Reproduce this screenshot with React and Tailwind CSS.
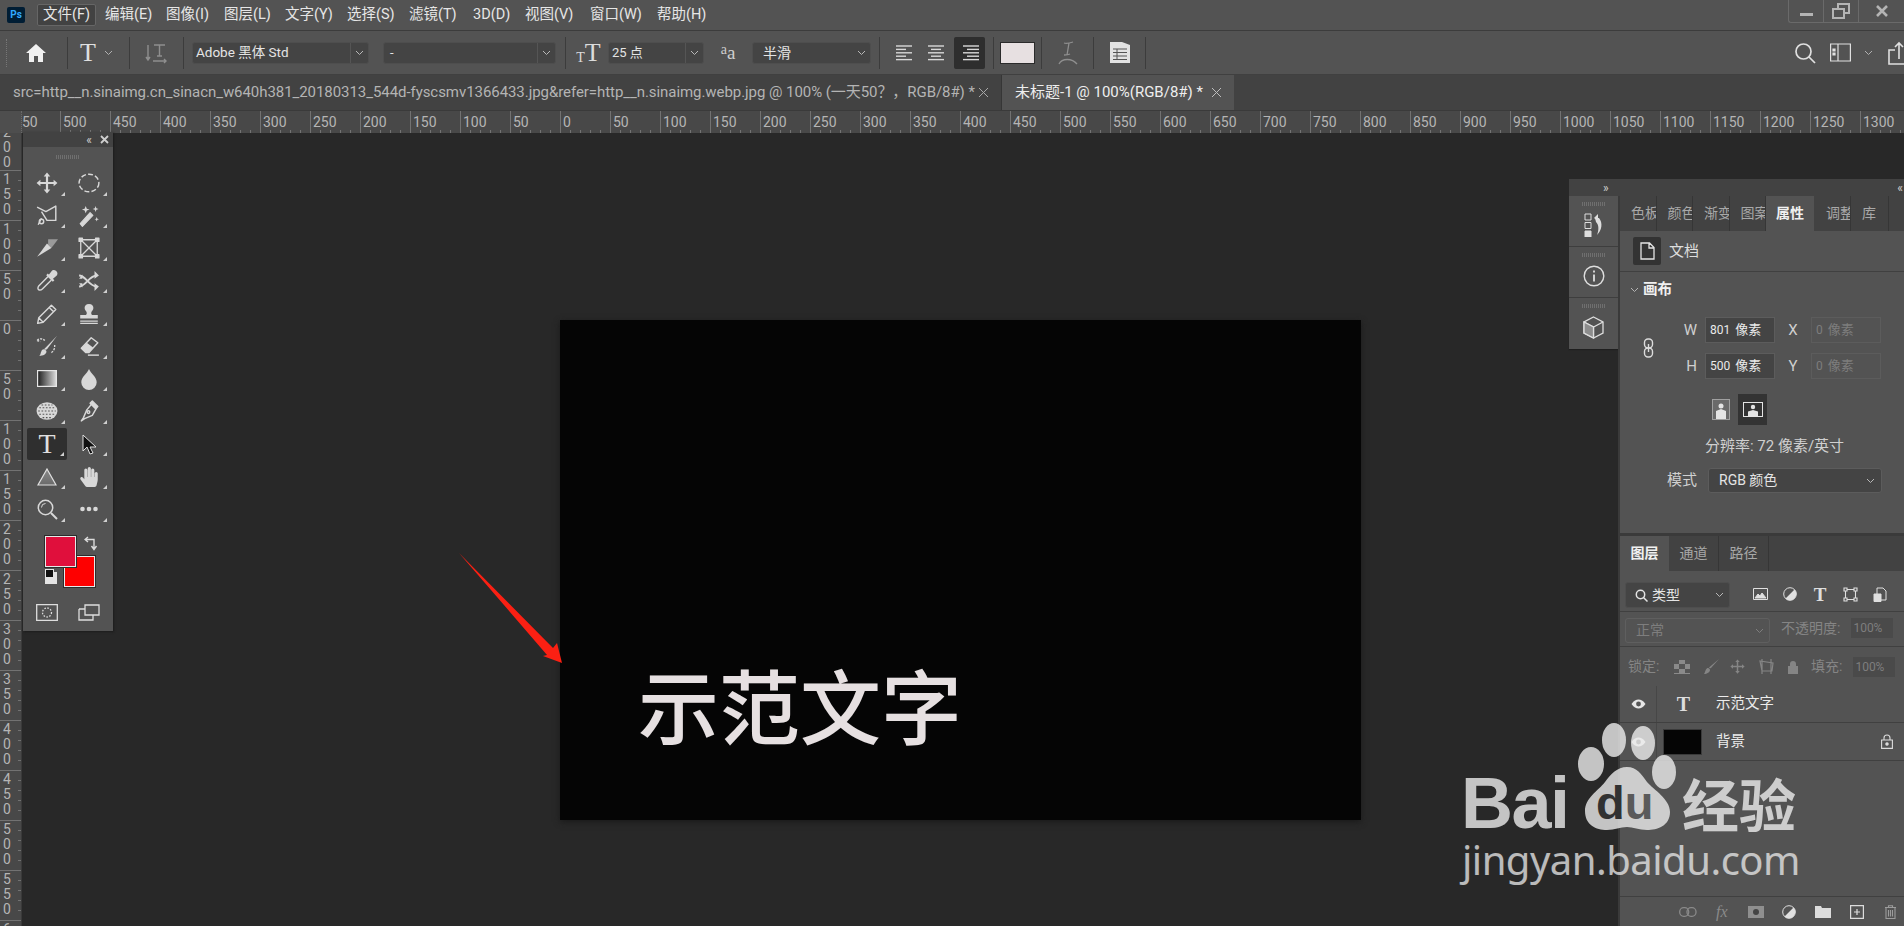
import { FaHandPaper } from "react-icons/fa";

const MENU = [
  ["文件(F)", "w-[68px] pl-[6px]"],
  ["编辑(E)", "w-[61px]"],
  ["图像(I)", "w-[58px]"],
  ["图层(L)", "w-[61px]"],
  ["文字(Y)", "w-[62px]"],
  ["选择(S)", "w-[62px]"],
  ["滤镜(T)", "w-[64px]"],
  ["3D(D)", "w-[52px]"],
  ["视图(V)", "w-[65px]"],
  ["窗口(W)", "w-[67px]"],
  ["帮助(H)", "w-[62px]"],
];

const H_LABELS = [
  500, 450, 400, 350, 300, 250, 200, 150, 100, 50, 0, 50, 100, 150, 200, 250, 300, 350, 400, 450, 500, 550, 600, 650,
  700, 750, 800, 850, 900, 950, 1000, 1050, 1100, 1150, 1200, 1250, 1300,
];
const V_LABELS = [150, 100, 50, 0, 50, 100, 150, 200, 250, 300, 350, 400, 450, 500, 550, 600];

function Ico({ s = 22, children, className = "", sw = 1.3 }) {
  return (
    <svg
      width={s}
      height={s}
      viewBox="0 0 20 20"
      fill="none"
      stroke="currentColor"
      strokeWidth={sw}
      strokeLinejoin="round"
      className={className}
    >
      {children}
    </svg>
  );
}

function Sep() {
  return <div className="w-px h-[32px] bg-[#3c3c3c] shrink-0" />;
}

function Chevron({ className = "" }) {
  return (
    <svg width="9" height="6" viewBox="0 0 9 6" fill="none" stroke="currentColor" className={className}>
      <path d="M1 1l3.5 3.5L8 1" />
    </svg>
  );
}

function Field({ className, text, divider = true, textClass = "pl-[3px] text-[13px]" }) {
  return (
    <div className={`h-[22px] shrink-0 flex items-center bg-[#444444] border border-[#4e4e4e] rounded-[3px] ${className}`}>
      <span className={`flex-1 leading-none text-[#e4e4e4] ${textClass}`}>{text}</span>
      <div className={`w-[18px] h-full flex items-center justify-center text-[#b8b8b8] ${divider ? "border-l border-[#555555]" : ""}`}>
        <Chevron />
      </div>
    </div>
  );
}

function AlignIcon({ kind }) {
  const rows = [
    [16, 10, 16, 10, 16],
    [16, 10, 16, 10, 16],
    [16, 12, 16, 12, 16],
  ][kind];
  return (
    <svg width="20" height="20" viewBox="0 0 20 20" stroke="#d8d8d8" strokeWidth="1.4">
      {rows.map((w, i) => {
        const x = kind === 0 ? 1 : kind === 1 ? 10 - w / 2 : 19 - w;
        return <path key={i} d={`M${x} ${3 + i * 3.4}h${w}`} />;
      })}
    </svg>
  );
}

function TabClose({ color }) {
  return (
    <svg width="11" height="11" viewBox="0 0 11 11" stroke={color} strokeWidth="1" className="shrink-0">
      <path d="M1 1l9 9M10 1l-9 9" />
    </svg>
  );
}

function OptionsBar() {
  return (
    <div className="h-[44px] shrink-0 flex items-center bg-[#535353] border-b border-[#404040] text-[#dcdcdc]">
      <div className="w-[67px] flex items-center shrink-0">
        <div className="w-[1px] h-[28px] ml-[6px] border-l border-dotted border-[#777777]" />
        <svg width="22" height="20" viewBox="0 0 22 20" className="ml-[18px]" fill="#f0f0f0">
          <path d="M11 1L1 10h3v9h5v-6h4v6h5v-9h3z" />
        </svg>
      </div>
      <Sep />
      <div className="w-[61px] flex items-center shrink-0 pl-[12px] gap-[8px]">
        <span className="font-['Liberation_Serif',serif] text-[26px] leading-none text-[#e0e0e0]">T</span>
        <Chevron className="text-[#b0b0b0]" />
      </div>
      <Sep />
      <div className="w-[53px] flex justify-center shrink-0 text-[#8f8f8f]">
        <svg width="24" height="24" viewBox="0 0 24 24" fill="none" stroke="currentColor" strokeWidth="1.4">
          <path d="M3 4v15M1 16l2 3 2-3M9 4h11M14.500 4v11M12 15h5M8 20h13M19 18l2 2-2 2" />
        </svg>
      </div>
      <Sep />
      <div className="w-[8px] shrink-0" />
      <Field className="w-[177px]" text="Adobe 黑体 Std" textClass="pl-[3px] text-[13.500px]" />
      <div className="w-[14px] shrink-0" />
      <Field className="w-[173px]" text="-" textClass="pl-[6px] text-[13px]" />
      <div className="w-[9px] shrink-0" />
      <Sep />
      <div className="w-[42px] shrink-0 flex items-end justify-center pl-[3px]">
        <span className="font-['Liberation_Serif',serif] text-[14px] leading-none text-[#dcdcdc] mb-[1px]">T</span>
        <span className="font-['Liberation_Serif',serif] text-[26px] leading-none text-[#dcdcdc]">T</span>
      </div>
      <Field className="w-[96px]" text="25 点" />
      <div className="w-[48px] shrink-0 flex items-end justify-center font-['Liberation_Serif',serif] text-[#cfcfcf]">
        <span className="text-[14px] leading-none mb-[5px]">a</span>
        <span className="text-[19px] leading-none">a</span>
      </div>
      <Field className="w-[119px]" text="半滑" divider={false} textClass="pl-[10px] text-[14px]" />
      <div className="w-[8px] shrink-0" />
      <Sep />
      <div className="w-[15px] shrink-0" />
      <div className="w-[20px] shrink-0 flex">
        <AlignIcon kind={0} />
      </div>
      <div className="w-[11px] shrink-0" />
      <div className="w-[20px] shrink-0 flex">
        <AlignIcon kind={1} />
      </div>
      <div className="w-[8px] shrink-0" />
      <div className="w-[31px] h-[32px] shrink-0 flex items-center justify-center bg-[#2e2e2e] rounded-[2px]">
        <AlignIcon kind={2} />
      </div>
      <div className="w-[8px] shrink-0" />
      <Sep />
      <div className="w-[6px] shrink-0" />
      <div className="w-[35px] h-[22px] shrink-0 bg-[#e7e0e1] border border-[#2b2b2b]" />
      <div className="w-[6px] shrink-0" />
      <Sep />
      <div className="w-[51px] shrink-0 flex justify-center text-[#8f8f8f]">
        <svg width="20" height="26" viewBox="0 0 20 26" fill="none" stroke="currentColor" strokeWidth="1.3">
          <path d="M6 3c3 1 6 0 9-1M11 3L9 15M6 15c2 0 4 0 6-1M1 24c3-6 13-6 18 0" />
        </svg>
      </div>
      <Sep />
      <div className="w-[51px] shrink-0 flex justify-center">
        <svg width="22" height="23" viewBox="0 0 22 23" fill="#e2e2e2">
          <path d="M1 1h12l8 3v18H1z" />
          <path d="M4 8h14M4 11.500h14M4 15h14M4 18.500h14M8 8v11" stroke="#555555" strokeWidth="1" />
        </svg>
      </div>
      <Sep />
      <div className="ml-auto flex items-center text-[#e0e0e0] shrink-0 -mr-[2px]">
        <svg width="22" height="22" viewBox="0 0 22 22" fill="none" stroke="currentColor" strokeWidth="1.7">
          <circle cx="9.500" cy="9.500" r="7.500" />
          <path d="M15 15l6 6" />
        </svg>
        <svg width="21" height="19" viewBox="0 0 21 19" fill="none" stroke="currentColor" strokeWidth="1.2" className="ml-[14px]">
          <path d="M.6 1h19.800v17H.6zM8 1v17" />
          <path d="M3 6h2v2H3zM3 10h2v2H3z" fill="currentColor" />
        </svg>
        <Chevron className="ml-[13px] text-[#b0b0b0]" />
        <svg width="18" height="24" viewBox="0 0 18 24" fill="none" stroke="currentColor" strokeWidth="1.600" className="ml-[15px]">
          <path d="M7 9H1v14h16" />
          <path d="M11 18V2M7 6l4-4 4 4" />
        </svg>
      </div>
    </div>
  );
}

function TabBar() {
  return (
    <div className="h-[36px] shrink-0 flex bg-[#424242] border-b border-[#3a3a3a]">
      <div className="w-[1002px] shrink-0 flex items-center pl-[13px] text-[#b4b4b4] text-[15px] whitespace-nowrap overflow-hidden border-r border-[#363636]">
        <span className="w-[956px] shrink-0 tracking-[-0.06px]">
          src=http__n.sinaimg.cn_sinacn_w640h381_20180313_544d-fyscsmv1366433.jpg&refer=http__n.sinaimg.webp.jpg @ 100% (一天50？，RGB/8#) *
        </span>
        <span className="ml-[9px]">
          <TabClose color="#a8a8a8" />
        </span>
      </div>
      <div className="w-[232px] shrink-0 flex items-center pl-[13px] bg-[#535353] text-[#eeeeee] text-[15px] whitespace-nowrap">
        <span className="w-[187px] shrink-0">未标题-1 @ 100%(RGB/8#) *</span>
        <span className="ml-[9px]">
          <TabClose color="#bdbdbd" />
        </span>
      </div>
    </div>
  );
}

function HTicks() {
  return (
    <svg width="50" height="22" className="absolute left-0 top-0" stroke="#727272">
      <path d="M.5 0v22M10.500 19v3M20.500 19v3M30.500 19v3M40.500 19v3" />
    </svg>
  );
}

function HRuler() {
  return (
    <div className="h-[22px] shrink-0 flex bg-[#484848] overflow-hidden text-[#b5b5b5] text-[14px] leading-[22px]">
      <div className="w-[22px] shrink-0 bg-[#4e4e4e] border-r border-dotted border-[#6a6a6a]" />
      <div className="w-[38px] shrink-0">50</div>
      {H_LABELS.map((n, i) => (
        <div key={i} className="w-[50px] shrink-0 relative pl-[3px]">
          <HTicks />
          <span className="relative">{n}</span>
        </div>
      ))}
    </div>
  );
}

function VDigits({ n }) {
  return (
    <div className="flex flex-col items-start pt-[2px] pl-[3px] text-[14px] leading-[15px] text-[#b5b5b5]">
      {String(n)
        .split("")
        .map((d, i) => (
          <span key={i}>{d}</span>
        ))}
    </div>
  );
}

function VRuler() {
  return (
    <div className="w-[22px] shrink-0 flex flex-col bg-[#484848] overflow-hidden border-r border-[#3a3a3a]">
      <div className="h-[37px] shrink-0 flex flex-col justify-end overflow-hidden">
        <VDigits n={200} />
      </div>
      {V_LABELS.map((n, i) => (
        <div key={i} className="h-[50px] shrink-0 relative">
          <svg width="22" height="50" className="absolute left-0 top-0" stroke="#727272">
            <path d="M0 .5h22M18 10.500h3M18 20.500h3M18 30.500h3M18 40.500h3" />
          </svg>
          <VDigits n={n} />
        </div>
      ))}
    </div>
  );
}

const TOOLS = [
  <Ico key="move" sw={0}>
    <path
      fill="currentColor"
      d="M10 .5l3 3.500h-2v5h5V7l3.500 3L16 13v-2h-5v5h2l-3 3.500L7 16h2v-5H4v2L.5 10 4 7v2h5V4H7z"
    />
  </Ico>,
  <Ico key="marquee">
    <ellipse cx="10" cy="10" rx="9" ry="8" strokeDasharray="4.500 2" />
  </Ico>,
  <Ico key="lasso">
    <path d="M1 2l8 4 9-5v13l-8 0-5-8M5 12l-3 6" />
    <circle cx="5" cy="15" r="2" />
  </Ico>,
  <Ico key="wand" sw={0}>
    <path d="M2 17l9-10 2.500 2.500-9.500 10z" fill="currentColor" stroke="currentColor" strokeWidth="1" />
    <path fill="currentColor" d="M7 1l1 2.500L10.500 4 8 5 7 7.500 6 5 3.500 4 6 3.500zM16 1l.7 2 2 .7-2 .7-.7 2-.7-2-2-.7 2-.7zM17 11l.6 1.500 1.500.5-1.500.5L17 15l-.6-1.500L15 13l1.400-.5z" />
  </Ico>,
  <Ico key="slice" sw={0}>
    <path fill="#9a9a9a" d="M11 2h9l-6 8-3-3z" />
    <path fill="currentColor" d="M10 6l4 4L1 18z" />
  </Ico>,
  <Ico key="frame" sw={1.2}>
    <path d="M2.500 2.500h15v15h-15zM2.500 2.500l15 15M17.500 2.500l-15 15" />
    <path
      fill="currentColor"
      d="M1 1h3v3H1zM16 1h3v3h-3zM1 16h3v3H1zM16 16h3v3h-3z"
    />
  </Ico>,
  <Ico key="dropper">
    <path d="M11 6L2.500 14.500c-1 1.500-1 3 0 3.500s2.500 0 3.500-1L14 9" />
    <path d="M10 4l6 6" strokeWidth="2" />
    <path fill="currentColor" d="M12 5l3-4c1-.7 3 0 3.700 1.500.3 1 0 2-1 2.700L14.500 8z" />
  </Ico>,
  <Ico key="cam" sw={1.700}>
    <path d="M1 5c6 0 9 10 16 10M1 15c6 0 9-10 16-10" />
    <path fill="currentColor" d="M15 1l4 4-4 3zM15 12l4 3-4 4zM1 8l3-4v4zM1 12l3 4v-4z" strokeWidth="0" />
  </Ico>,
  <Ico key="pencil">
    <path d="M1.500 18.500l1-5L14 2l4 4L6.500 17.500zM2.500 13.500l4 4M12 4l4 4" />
  </Ico>,
  <Ico key="stamp" sw={0}>
    <path fill="currentColor" d="M10 1c2.800 0 4 2 4 3.500 0 2-2 3-2 4.500 0 1 .5 2 1.500 2H18v3H2v-3h4.500C7.500 11 8 10 8 9 8 7.500 6 6.500 6 4.500 6 3 7.200 1 10 1zM2 16h16v1H2zM2 18h16v1H2z" />
  </Ico>,
  <Ico key="brush" sw={0}>
    <path fill="currentColor" d="M19 1L10 13c-1 .6-2 .3-2.500-.3zM7 13c1 0 2.500 1 2.500 2 0 2.500-3 4-6.500 4 1.500-1.500 1-3 2-4.500.3-.8 1-1.500 2-1.500z" />
    <path d="M1 5c2-2 5-2 7 0M1 5l3 1M1 5l2-2M17 9c0 2 0 5-3 7" fill="none" stroke="currentColor" strokeWidth="1.200" strokeDasharray="2 1" />
  </Ico>,
  <Ico key="eraser">
    <path d="M3 12L12 2.500l6 4.500-8 9H7z" />
    <path fill="currentColor" strokeWidth="0" d="M3 12L8 7l6 4.500-4 4.500H7z" />
    <path d="M9 18.300h10" />
  </Ico>,
  <svg key="grad" width="20" height="18" viewBox="0 0 20 18">
    <defs>
      <linearGradient id="grd">
        <stop offset="0" stopColor="#1d1d1d" />
        <stop offset="1" stopColor="#dddddd" />
      </linearGradient>
    </defs>
    <rect x=".6" y=".6" width="18.800" height="15.800" fill="url(#grd)" stroke="#e6e6e6" strokeWidth="1.200" />
  </svg>,
  <Ico key="drop" sw={0}>
    <path fill="currentColor" d="M10 1c1.500 4 7 7 7 12a7 7 0 0 1-14 0c0-5 5.500-8 7-12z" />
  </Ico>,
  <Ico key="sponge" sw={0}>
    <ellipse cx="10" cy="10" rx="9.500" ry="8" fill="currentColor" />
    <path d="M3 7h14M2 10h16M3 13h14M5 4.500h10M6 16h8" stroke="#555555" strokeWidth="1" strokeDasharray="1.500 1.500" />
  </Ico>,
  <Ico key="pen">
    <path d="M13 3l4 4-4 7-7 3-3 2 2-3 3-7z" />
    <path fill="currentColor" d="M13 1l5 5-2 2-5-5z" />
    <circle cx="9.500" cy="11" r="1.200" />
  </Ico>,
  <span key="T" className="font-['Liberation_Serif',serif] text-[28px] leading-none text-[#e0e0e0]">T</span>,
  <svg key="arrow" width="16" height="21" viewBox="0 0 16 21">
    <path d="M2 1v16l4-4 3 7 3-1-3-6h6z" fill="#111111" stroke="#e0e0e0" strokeWidth="1" />
  </svg>,
  <svg key="shape" width="20" height="18" viewBox="0 0 20 18">
    <defs>
      <linearGradient id="shp" x1="0" x2="0" y1="0" y2="1">
        <stop offset="0" stopColor="#8a8a8a" />
        <stop offset="1" stopColor="#6a6a6a" />
      </linearGradient>
    </defs>
    <path d="M10 1l9 16H1z" fill="url(#shp)" stroke="#e0e0e0" strokeWidth="1.200" />
  </svg>,
  <FaHandPaper key="hand" size={20} />,
  <svg key="zoom" width="21" height="21" viewBox="0 0 21 21" fill="none" stroke="currentColor" strokeWidth="1.500">
    <circle cx="8.500" cy="8.500" r="7.200" />
    <path d="M4.500 8.500a4 4 0 0 1 4-4" strokeWidth="1" />
    <path d="M14 14l6 6" strokeWidth="2" />
  </svg>,
  <svg key="more" width="18" height="6" viewBox="0 0 18 6" fill="currentColor">
    <circle cx="2.500" cy="3" r="2.300" />
    <circle cx="9" cy="3" r="2.300" />
    <circle cx="15.500" cy="3" r="2.300" />
  </svg>,
];

function ToolPanel() {
  return (
    <div className="absolute left-[1px] top-[-1px] w-[90px] h-[499px] bg-[#535353] shadow-[1px_1px_2px_#1c1c1c] flex flex-col text-[#d8d8d8]">
      <div className="h-[15px] shrink-0 bg-[#424242] flex items-center justify-end gap-[8px] pr-[4px]">
        <span className="text-[12px] leading-none text-[#cfcfcf]">«</span>
        <svg width="9" height="9" viewBox="0 0 9 9" stroke="#cfcfcf" strokeWidth="1.800">
          <path d="M1 1l7 7M8 1L1 8" />
        </svg>
      </div>
      <div className="h-[20px] shrink-0 flex items-center justify-center">
        <div className="w-[24px] h-[4px] bg-[repeating-linear-gradient(90deg,#6f6f6f_0_1px,transparent_1px_2px)]" />
      </div>
      <div className="grid grid-cols-[42px_42px] auto-rows-[32.6px] pl-[3px]">
        {TOOLS.map((t) => (
          <div
            key={t.key}
            className={`relative flex items-center justify-center ${t.key === "T" ? "bg-[#2f2f2f] rounded-[2px] mx-[1px]" : ""}`}
          >
            {t}
            <svg width="4" height="4" viewBox="0 0 4 4" className="absolute right-[3px] bottom-[4px]" fill="#cfcfcf">
              <path d="M4 0v4H0z" />
            </svg>
          </div>
        ))}
      </div>
      <div className="h-[74px] shrink-0 relative">
        <div className="absolute left-[41px] top-[30px] w-[31px] h-[31px] bg-[#fe0000] border border-[#e8e8e8] outline outline-[#2c2c2c]" />
        <div className="absolute left-[22px] top-[10px] w-[31px] h-[31px] bg-[#e00f3c] border border-[#e8e8e8] outline outline-[#2c2c2c]" />
        <svg width="14" height="15" viewBox="0 0 14 15" fill="none" stroke="#dcdcdc" strokeWidth="1.400" className="absolute left-[61px] top-[10px]">
          <path d="M4 1L1 3.500 4 6M1 3.500h9V12M7.500 10l2.500 3.500 2.500-3.500" />
        </svg>
        <div className="absolute left-[22px] top-[46px] w-[12px] h-[12px] bg-[#e4e4e4]" />
        <div className="absolute left-[22px] top-[43px] w-[9px] h-[9px] bg-[#111111] border border-[#e4e4e4]" />
      </div>
      <div className="flex pl-[3px] h-[26px] items-center">
        <div className="w-[42px] flex justify-center">
          <svg width="22" height="17" viewBox="0 0 22 17" fill="none" stroke="#dedede" strokeWidth="1.300">
            <path d="M.7.7h20.600v15.600H.7z" />
            <circle cx="11" cy="8.500" r="4.500" strokeDasharray="1.500 1.500" />
          </svg>
        </div>
        <div className="w-[42px] flex justify-center">
          <svg width="22" height="17" viewBox="0 0 22 17" fill="none" stroke="#dedede" strokeWidth="1.300">
            <path d="M7 1h14v10H7zM1 5h6M1 5v11h14v-5" />
          </svg>
        </div>
      </div>
    </div>
  );
}

function Watermark() {
  return (
    <div className="absolute left-0 top-0 pointer-events-none">
      <svg width="1904" height="926" className="absolute left-0 top-0 opacity-80" fill="#ececec">
        <ellipse cx="1591" cy="764" rx="13" ry="17" />
        <ellipse cx="1614" cy="740" rx="12" ry="17" />
        <ellipse cx="1643" cy="743" rx="12" ry="17" />
        <ellipse cx="1664" cy="772" rx="12" ry="17" />
        <path d="M1627 767c10 0 14 7 20 15 7 8 23 17 23 30 0 14-13 18-23 18-8 0-14-3-20-3-7 0-12 3-20 3-11 0-22-5-22-19 0-13 13-20 20-29 6-8 12-15 22-15z" />
      </svg>
      <span className="absolute left-[1461px] top-[760px] font-['Liberation_Sans',sans-serif] font-bold text-[72px] leading-[86px] tracking-[-1.500px] text-[#ececec] opacity-80 whitespace-nowrap">
        Bai
      </span>
      <span className="absolute left-[1596px] top-[776px] font-['Liberation_Sans',sans-serif] font-bold text-[47px] leading-[54px] whitespace-nowrap">
        <span className="text-[#323232]">d</span>
        <span className="text-[#5a5a5a]">u</span>
      </span>
      <span className="absolute left-[1682px] top-[760px] font-['Noto_Sans_CJK_SC',sans-serif] font-bold text-[57px] leading-[84px] text-[#ececec] opacity-80 whitespace-nowrap">
        经验
      </span>
      <span className="absolute left-[1462px] top-[835px] font-['Noto_Sans',sans-serif] text-[40px] leading-[50px] tracking-[-0.5px] text-[#ececec] opacity-75 whitespace-nowrap">
        jingyan.baidu.com
      </span>
    </div>
  );
}

function PropsPanel() {
  return (
    <div className="h-[337px] shrink-0 flex flex-col bg-[#535353] text-[#d4d4d4] text-[14px]">
      <div className="h-[35px] shrink-0 flex bg-[#424242] text-[#a8a8a8]">
        {["色板", "颜色", "渐变", "图案"].map((t) => (
          <div key={t} className="w-[36.500px] shrink-0 border-r border-[#363636] flex items-center pl-[11px] overflow-hidden whitespace-nowrap">
            {t}
          </div>
        ))}
        <div className="w-[48px] shrink-0 bg-[#535353] text-[#f0f0f0] font-bold flex items-center justify-center">属性</div>
        <div className="w-[37px] shrink-0 border-r border-[#363636] flex items-center pl-[12px] overflow-hidden whitespace-nowrap">调整</div>
        <div className="w-[38px] shrink-0 border-r border-[#363636] flex items-center pl-[11px]">库</div>
      </div>
      <div className="h-[41px] shrink-0 flex items-center pl-[13px] border-b border-[#404040]">
        <div className="w-[28px] h-[28px] bg-[#333333] rounded-[2px] flex items-center justify-center">
          <svg width="15" height="18" viewBox="0 0 15 18" fill="none" stroke="#e4e4e4" strokeWidth="1.300">
            <path d="M1 1h8.500L14 5.500V17H1zM9 1v5h5" />
          </svg>
        </div>
        <span className="ml-[8px] text-[#dedede] text-[15px]">文档</span>
      </div>
      <div className="h-[35px] shrink-0 flex items-center pl-[10px]">
        <Chevron className="text-[#b4b4b4]" />
        <span className="ml-[4px] font-bold text-[#f0f0f0] text-[14.500px]">画布</span>
      </div>
      <div className="flex items-center mt-[10px]">
        <div className="w-[44px] flex justify-center pl-[12px]">
          <svg width="11" height="20" viewBox="0 0 11 20" fill="none" stroke="#dcdcdc" strokeWidth="1.400">
            <rect x="1.500" y="1" width="8" height="9" rx="3.500" />
            <rect x="1.500" y="10" width="8" height="9" rx="3.500" />
            <path d="M5.500 6v8" />
          </svg>
        </div>
        <div className="flex-1 flex flex-col gap-[10px]">
          {[
            ["W", "801", "X"],
            ["H", "500", "Y"],
          ].map(([a, n, b]) => (
            <div key={a} className="flex items-center h-[26px]">
              <span className="w-[33px] text-right text-[15px] text-[#cfcfcf]">{a}</span>
              <div className="ml-[8px] w-[70px] h-[26px] bg-[#444444] border border-[#5c5c5c] flex items-center pl-[4px] text-[12px] text-[#eaeaea] whitespace-nowrap">
                {n} <span className="ml-[5px] text-[13px]">像素</span>
              </div>
              <span className="w-[36px] text-center text-[15px] text-[#cfcfcf]">{b}</span>
              <div className="w-[70px] h-[26px] border border-[#5c5c5c] flex items-center pl-[4px] text-[12px] text-[#7d7d7d] whitespace-nowrap">
                0 <span className="ml-[5px] text-[13px]">像素</span>
              </div>
            </div>
          ))}
        </div>
      </div>
      <div className="flex items-center h-[31px] mt-[15px] pl-[92px]">
        <div className="w-[18px] h-[21px] border border-[#a0a0a0] flex items-end justify-center bg-[#6a6a6a] mr-[8px]">
          <svg width="12" height="16" viewBox="0 0 12 16" fill="#e4e4e4">
            <circle cx="6" cy="3" r="2.500" />
            <path d="M1 16V8l5-2 5 2v8z" />
          </svg>
        </div>
        <div className="w-[29px] h-[31px] bg-[#333333] flex items-center justify-center">
          <svg width="20" height="15" viewBox="0 0 20 15">
            <rect x=".5" y=".5" width="19" height="14" fill="none" stroke="#e4e4e4" />
            <circle cx="10" cy="5" r="2.200" fill="#e4e4e4" />
            <path d="M5 14V9.500l5-1.500 5 1.500V14z" fill="#e4e4e4" />
          </svg>
        </div>
      </div>
      <div className="mt-[12px] pl-[85px] text-[15px] leading-[18px] text-[#d0d0d0] whitespace-nowrap">分辨率: 72 像素/英寸</div>
      <div className="flex items-center mt-[13px] pl-[47px]">
        <span className="text-[#d0d0d0] text-[15px]">模式</span>
        <div className="ml-[11px] w-[174px] h-[25px] bg-[#444444] border border-[#5c5c5c] rounded-[3px] flex items-center pl-[10px] pr-[6px] justify-between text-[14px] text-[#e4e4e4]">
          RGB 颜色
          <Chevron className="text-[#b8b8b8]" />
        </div>
      </div>
    </div>
  );
}

function LayersPanel() {
  const Mark = ({ children }) => <div className="w-[30px] flex justify-center">{children}</div>;
  const Foot = ({ children }) => <div className="w-[33.670px] shrink-0 flex justify-center">{children}</div>;
  return (
    <div className="flex-1 flex flex-col bg-[#535353] text-[#d4d4d4] text-[14px] min-h-0">
      <div className="h-[35px] shrink-0 flex bg-[#424242] text-[#a8a8a8]">
        <div className="w-[49px] bg-[#535353] text-[#f0f0f0] font-bold flex items-center justify-center">图层</div>
        <div className="w-[50px] border-r border-[#363636] flex items-center justify-center">通道</div>
        <div className="w-[50px] border-r border-[#363636] flex items-center justify-center">路径</div>
      </div>
      <div className="h-[41px] shrink-0 flex items-start pt-[11px] pl-[5px] border-b border-[#404040]">
        <div className="w-[105px] h-[26px] bg-[#444444] border border-[#4e4e4e] rounded-[3px] flex items-center pl-[9px] pr-[5px] justify-between">
          <span className="flex items-center gap-[4px] text-[#e4e4e4] text-[14px]">
            <svg width="13" height="13" viewBox="0 0 13 13" fill="none" stroke="#e4e4e4" strokeWidth="1.500">
              <circle cx="5.500" cy="5.500" r="4.200" />
              <path d="M8.500 8.500l4 4" />
            </svg>
            类型
          </span>
          <Chevron className="text-[#b8b8b8]" />
        </div>
        <div className="flex items-center h-[24px] ml-[15px]">
          <Mark>
            <svg width="15" height="12" viewBox="0 0 15 12" fill="none" stroke="#e0e0e0">
              <path d="M.5.500h14v11H.5z" />
              <path d="M2 10l3-4 2 2 2-3 4 5z" fill="#e0e0e0" />
            </svg>
          </Mark>
          <Mark>
            <svg width="14" height="14" viewBox="0 0 14 14">
              <circle cx="7" cy="7" r="6.300" fill="none" stroke="#e0e0e0" />
              <path d="M2.500 11.500l9-9a6.300 6.300 0 0 1-9 9z" fill="#e0e0e0" />
            </svg>
          </Mark>
          <Mark>
            <span className="font-['Liberation_Serif',serif] text-[19px] leading-none font-bold text-[#dedede]">T</span>
          </Mark>
          <Mark>
            <svg width="15" height="15" viewBox="0 0 15 15" fill="#555555" stroke="#e0e0e0" strokeWidth="1.100">
              <path d="M2.500 2.500h10v10h-10z" fill="none" />
              <path d="M1 1h3v3H1zM11 1h3v3h-3zM1 11h3v3H1zM11 11h3v3h-3z" />
            </svg>
          </Mark>
          <Mark>
            <svg width="14" height="15" viewBox="0 0 14 15" fill="none" stroke="#e0e0e0">
              <path d="M4 7V1h6l3 3v9H8" />
              <path d="M1 7h7v7.500H1z" fill="#e0e0e0" />
            </svg>
          </Mark>
        </div>
      </div>
      <div className="h-[35px] shrink-0 flex items-start pt-[6px] pl-[5px] border-b border-[#404040]">
        <div className="w-[145px] h-[25px] border border-[#5f5f5f] rounded-[3px] flex items-center pl-[10px] pr-[5px] justify-between text-[#7e7e7e] text-[14px]">
          正常
          <Chevron />
        </div>
        <span className="ml-[11px] text-[#858585] text-[14px] whitespace-nowrap">不透明度:</span>
        <div className="ml-[11px] w-[42px] h-[20px] bg-[#4a4a4a] flex items-center pl-[2px] text-[12px] text-[#7e7e7e]">100%</div>
      </div>
      <div className="h-[39px] shrink-0 flex items-center pl-[8px] text-[#858585] text-[14px]">
        <span className="w-[46px] whitespace-nowrap">锁定:</span>
        <div className="w-[16px] h-[14px] grid grid-cols-3 grid-rows-3 mr-[14px] bg-[#8a8a8a]">
          <div className="bg-[#555555]" />
          <div />
          <div className="bg-[#555555]" />
          <div />
          <div className="bg-[#555555]" />
          <div />
          <div className="bg-[#555555]" />
          <div />
          <div className="bg-[#555555]" />
        </div>
        <svg width="16" height="17" viewBox="0 0 16 17" fill="#858585" className="mr-[10px]">
          <path d="M15 1L7 10c-1 .6-1.600 0-2-.4zM4 10c1 0 2 1 2 2 0 2-3 4-6 4 1-1 1-3 2-4.500.5-.9 1-1.500 2-1.500z" />
        </svg>
        <svg width="15" height="15" viewBox="0 0 20 20" fill="#858585" className="mr-[14px]">
          <path d="M10 .5l3 3.500h-2v5h5V7l3.500 3L16 13v-2h-5v5h2l-3 3.500L7 16h2v-5H4v2L.5 10 4 7v2h5V4H7z" />
        </svg>
        <svg width="16" height="15" viewBox="0 0 16 15" fill="none" stroke="#858585" strokeWidth="1.200" className="mr-[12px]">
          <path d="M1 2l13 2-1 8H3zM3 0v15M12 0v15" />
        </svg>
        <svg width="12" height="14" viewBox="0 0 12 14" fill="#858585" className="mr-[12px]">
          <path d="M3 6V4a3 3 0 0 1 6 0v2h2v8H1V6z" />
        </svg>
        <span className="whitespace-nowrap">填充:</span>
        <div className="ml-[11px] w-[42px] h-[20px] bg-[#4a4a4a] flex items-center pl-[2px] text-[12px] text-[#7e7e7e]">100%</div>
      </div>
      <div className="h-[37px] shrink-0 flex items-center border-b border-[#404040]">
        <div className="w-[37px] h-full flex items-center justify-center border-r border-[#474747]">
          <Eye />
        </div>
        <span className="w-[59px] pr-[6px] text-center font-['Liberation_Serif',serif] text-[20px] leading-none font-bold text-[#dedede]">T</span>
        <span className="text-[#ececec] text-[14.500px]">示范文字</span>
      </div>
      <div className="h-[38px] shrink-0 flex items-center border-b border-[#404040]">
        <div className="w-[37px] h-full flex items-center justify-center border-r border-[#474747]">
          <Eye />
        </div>
        <div className="ml-[6px] w-[39px] h-[26px] bg-[#050505] border border-[#3a3a3a]" />
        <span className="ml-[14px] text-[#ececec] text-[14.500px]">背景</span>
        <svg width="12" height="15" viewBox="0 0 12 15" fill="none" stroke="#dcdcdc" strokeWidth="1.100" className="ml-auto mr-[11px]">
          <path d="M.6 6h10.800v8.400H.6zM3 6V4a3 3 0 0 1 6 0v2" />
          <circle cx="6" cy="10" r="1.200" fill="#dcdcdc" />
        </svg>
      </div>
      <div className="flex-1" />
      <div className="h-[30px] shrink-0 border-t border-[#404040] flex items-center justify-end -mr-[3px] text-[#8a8a8a]">
        <Foot>
          <svg width="18" height="10" viewBox="0 0 18 10" fill="none" stroke="currentColor" strokeWidth="1.300">
            <rect x=".7" y=".7" width="9" height="8.600" rx="4" />
            <rect x="8" y=".7" width="9" height="8.600" rx="4" />
          </svg>
        </Foot>
        <Foot>
          <span className="italic font-['Liberation_Serif',serif] text-[16px] leading-none">fx</span>
        </Foot>
        <Foot>
          <svg width="16" height="12" viewBox="0 0 16 12">
            <rect width="16" height="12" fill="#8f8f8f" />
            <circle cx="8" cy="6" r="3" fill="#444444" />
          </svg>
        </Foot>
        <Foot>
          <svg width="14" height="14" viewBox="0 0 14 14">
            <circle cx="7" cy="7" r="6.300" fill="none" stroke="#e0e0e0" />
            <path d="M2.500 11.500l9-9a6.300 6.300 0 0 1-9 9z" fill="#e0e0e0" />
          </svg>
        </Foot>
        <Foot>
          <svg width="16" height="12" viewBox="0 0 16 12" fill="#dcdcdc">
            <path d="M0 0h6l1 2h9v10H0z" />
          </svg>
        </Foot>
        <Foot>
          <svg width="14" height="14" viewBox="0 0 14 14" fill="none" stroke="#dcdcdc" strokeWidth="1.200">
            <path d="M.6.600h12.800v12.800H.6zM7 4v6M4 7h6" />
          </svg>
        </Foot>
        <Foot>
          <svg width="13" height="14" viewBox="0 0 13 14" fill="none" stroke="#9c9c9c" strokeWidth="1.100">
            <path d="M1 2.500h11M4.500 2.500V.8h4v1.700M2 2.500v11h9v-11M4.500 5v6.500M6.500 5v6.500M8.500 5v6.500" />
          </svg>
        </Foot>
      </div>
    </div>
  );
}

function Eye() {
  return (
    <svg width="15" height="10" viewBox="0 0 15 10">
      <path d="M.5 5C3 1.500 5 .5 7.500.5S12 1.500 14.500 5C12 8.500 10 9.500 7.500 9.500S3 8.500.5 5z" fill="#e6e6e6" />
      <circle cx="7.500" cy="5" r="2.400" fill="#555555" />
    </svg>
  );
}

function Dock() {
  const grip = <div className="w-[24px] h-[4px] mx-auto mt-[6px] bg-[repeating-linear-gradient(90deg,#6f6f6f_0_1px,transparent_1px_2px)]" />;
  return (
    <div className="w-[335px] shrink-0 pt-[46px] flex flex-col">
      <div className="h-[17px] shrink-0 flex items-center justify-between bg-[#424242] pr-[1px] pl-[34px] text-[12px] leading-none text-[#cfcfcf]">
        <span>»</span>
        <span>«</span>
      </div>
      <div className="flex-1 flex min-h-0">
        <div className="w-[49px] shrink-0 flex flex-col text-[#d8d8d8]">
          <div className="h-[51px] bg-[#535353] border-b border-[#3e3e3e]">
            {grip}
            <div className="flex justify-center mt-[7px]">
              <svg width="20" height="24" viewBox="0 0 20 24" fill="none" stroke="#dedede">
                <path d="M1 1h6v6H1zM1 9.500h6v6H1z" />
                <path d="M1 18h6v6H1z" fill="#dedede" />
                <path d="M11 5h4c4 5 3 12-2 17 2-5 2-10-1-13z" fill="#dedede" stroke="none" />
                <path d="M14 1l-4 4 4 3z" fill="#dedede" stroke="none" />
              </svg>
            </div>
          </div>
          <div className="h-[51px] bg-[#535353] border-b border-[#3e3e3e]">
            {grip}
            <div className="flex justify-center mt-[8px]">
              <svg width="22" height="22" viewBox="0 0 22 22" fill="none" stroke="#dedede" strokeWidth="1.400">
                <circle cx="11" cy="11" r="9.800" />
                <path d="M11 9.500v7M11 5.500v2" strokeWidth="1.800" />
              </svg>
            </div>
          </div>
          <div className="h-[51px] bg-[#535353] shadow-[0_1px_1px_#1f1f1f]">
            {grip}
            <div className="flex justify-center mt-[8px]">
              <svg width="21" height="23" viewBox="0 0 21 23" fill="none" stroke="#dedede" strokeWidth="1.300">
                <path d="M10.500 1L20 6v11l-9.500 5L1 17V6z" />
                <path d="M1 6l9.500 5L20 6M10.500 11v11" />
                <path d="M1 6l9.500 5v11L1 17z" fill="#8d8d8d" />
              </svg>
            </div>
          </div>
        </div>
        <div className="flex-1 flex flex-col min-w-0 border-l-2 border-[#3a3a3a]">
          <PropsPanel />
          <div className="h-[3px] shrink-0 bg-[#3a3a3a]" />
          <LayersPanel />
        </div>
      </div>
    </div>
  );
}

export default function App() {
  return (
    <div className="relative w-[1904px] h-[926px] overflow-hidden flex flex-col bg-[#282828] font-['Roboto','Noto_Sans_CJK_SC',sans-serif] text-[14px]">
      {/* menu bar */}
      <div className="h-[31px] shrink-0 flex items-center bg-[#535353] border-b border-[#3c3c3c] text-[#e6e6e6] text-[14.500px] relative">
        <div className="w-[18px] h-[16px] ml-[7px] mr-[12px] bg-[#001d34] rounded-[2px] flex items-center justify-center text-[10px] font-bold leading-none text-[#31a8ff]">
          Ps
        </div>
        {MENU.map(([label, cls], i) => (
          <div key={label} className={`shrink-0 whitespace-nowrap ${cls}`}>
            {i === 0 ? (
              <span className="inline-block -ml-[6px] px-[5px] h-[22px] leading-[20px] bg-[#424242] border border-[#666666] rounded-[2px] w-[59px]">
                {label}
              </span>
            ) : (
              label
            )}
          </div>
        ))}
        <div className="ml-auto w-[116px] h-[23px] self-start flex items-center border-l border-b border-[#6a6a6a] rounded-bl-[3px] text-[#b4b4b4]">
          <div className="w-[35px] h-full flex items-center justify-center border-r border-[#6a6a6a]">
            <div className="w-[13px] h-[3px] mt-[6px] bg-[#b4b4b4]" />
          </div>
          <div className="w-[35px] h-full flex items-center justify-center border-r border-[#6a6a6a]">
            <svg width="18" height="16" viewBox="0 0 18 16" fill="none" stroke="currentColor" strokeWidth="2">
              <path d="M6 5V1h11v9h-5M1 6h11v9H1z" />
            </svg>
          </div>
          <div className="flex-1 flex items-center justify-center">
            <svg width="12" height="12" viewBox="0 0 12 12" stroke="currentColor" strokeWidth="2.600">
              <path d="M1 1l10 10M11 1L1 11" />
            </svg>
          </div>
        </div>
      </div>
      <OptionsBar />
      <TabBar />
      <HRuler />
      {/* workspace */}
      <div className="flex-1 flex min-h-0">
        <VRuler />
        <div className="flex-1 min-w-0 relative pl-[538px] pt-[187px]">
          <ToolPanel />
          <div className="w-[801px] h-[500px] bg-[#050505] shadow-[0_2px_6px_#1a1a1a] relative flex items-start">
            <span className="ml-[78px] mt-[323px] font-['Noto_Sans_CJK_SC',sans-serif] font-medium text-[81px] leading-[120px] text-[#e6e0e1] whitespace-nowrap">
              示范文字
            </span>
            <svg width="110" height="120" viewBox="0 0 110 120" className="absolute left-[-104px] top-[231px] overflow-visible">
              <path d="M3 2l94 95 4-5 5 20-19-7 4-1z" fill="#fb2013" />
            </svg>
          </div>
        </div>
        <Dock />
      </div>
      <Watermark />
    </div>
  );
}
